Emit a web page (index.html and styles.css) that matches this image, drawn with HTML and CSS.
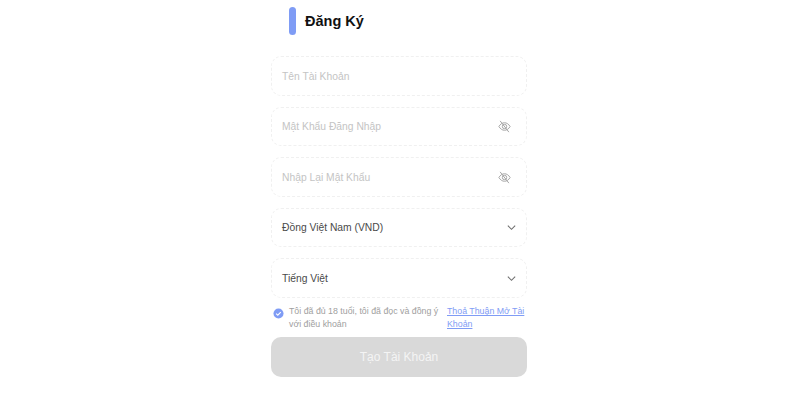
FILE: index.html
```html
<!DOCTYPE html>
<html lang="vi">
<head>
  <meta charset="UTF-8">
  <title>Đăng Ký</title>
  <link rel="stylesheet" href="styles.css">
</head>
<body>
  <div class="container">
    <div class="heading">
      <span class="heading-bar"></span>
      <h1>Đăng Ký</h1>
    </div>
    <div class="fields">
      <div class="field placeholder">Tên Tài Khoản</div>
      <div class="field placeholder">
        Mật Khẩu Đăng Nhập
        <svg class="eye" viewBox="0 0 24 24"><path d="M3 12c2.500-4 5.500-6 9-6s6.500 2 9 6c-2.500 4-5.500 6-9 6s-6.500-2-9-6z"/><circle cx="12" cy="12" r="3.500"/><path d="M5 3l14 18"/></svg>
      </div>
      <div class="field placeholder">
        Nhập Lại Mật Khẩu
        <svg class="eye" viewBox="0 0 24 24"><path d="M3 12c2.500-4 5.500-6 9-6s6.500 2 9 6c-2.500 4-5.500 6-9 6s-6.500-2-9-6z"/><circle cx="12" cy="12" r="3.500"/><path d="M5 3l14 18"/></svg>
      </div>
      <div class="field">
        Đồng Việt Nam (VND)
        <svg class="chevron" viewBox="0 0 12 12"><path d="M2 4l4 4 4-4"/></svg>
      </div>
      <div class="field">
        Tiếng Việt
        <svg class="chevron" viewBox="0 0 12 12"><path d="M2 4l4 4 4-4"/></svg>
      </div>
    </div>
    <div class="terms">
      <svg class="check" viewBox="0 0 12 12"><circle cx="6" cy="6" r="5.500"/><path d="M3.400 6.200l1.800 1.700 3.300-3.500"/></svg>
      <p class="terms-text">Tôi đã đủ 18 tuổi, tôi đã đọc và đồng ý với điều khoản</p>
      <a class="terms-link" href="#">Thoả Thuận Mở Tài Khoản</a>
    </div>
    <button class="submit">Tạo Tài Khoản</button>
  </div>
</body>
</html>
```
FILE: styles.css
```css
body {
  margin: 0;
  background-color: #fff;
  font-family: "Liberation Sans", sans-serif;
}

.container {
  width: 256px;
  margin: 0 auto;
  padding-right: 2px;
}

.heading {
  display: flex;
  align-items: center;
  gap: 9px;
  height: 28px;
  padding: 7px 0 0 18px;
}

.heading-bar {
  width: 7px;
  height: 28px;
  border-radius: 4px;
  background-color: #7f9cf5;
}

h1 {
  margin: 0;
  font-size: 14.500px;
  font-weight: 700;
  color: #111;
}

.fields {
  display: flex;
  flex-direction: column;
  gap: 11px;
  margin-top: 21.400px;
}

.field {
  display: flex;
  justify-content: space-between;
  align-items: center;
  box-sizing: border-box;
  height: 39.500px;
  padding: 0 9px 0 10px;
  border: 1px dashed #f0f0f0;
  border-radius: 10px;
  font-size: 10.300px;
  color: #4a4a4a;
}

.placeholder {
  color: #c4c4c4;
}

.eye {
  width: 15px;
  height: 15px;
  margin-right: 5px;
  fill: none;
  stroke: #a0a0a0;
  stroke-width: 1.500;
}

.chevron {
  width: 11px;
  height: 11px;
  fill: none;
  stroke: #707070;
  stroke-width: 1.200;
}

.terms {
  display: flex;
  align-items: flex-start;
  margin-top: 7px;
  font-size: 8.800px;
  line-height: 13px;
}

.check {
  flex: none;
  width: 11px;
  height: 11px;
  margin: 3px 5px 0 2px;
}

.check circle {
  fill: #7f9cf5;
}

.check path {
  fill: none;
  stroke: #fff;
  stroke-width: 1.200;
}

.terms-text {
  flex: none;
  width: 158px;
  margin: 0;
  color: #a0a0a0;
}

.terms-link {
  width: 78px;
  color: #7f9cf5;
}

.submit {
  display: block;
  width: 100%;
  height: 40px;
  margin-top: 6px;
  border: none;
  border-radius: 10px;
  background-color: #d9d9d9;
  color: #f4f4f4;
  font-family: inherit;
  font-size: 12px;
}
```
